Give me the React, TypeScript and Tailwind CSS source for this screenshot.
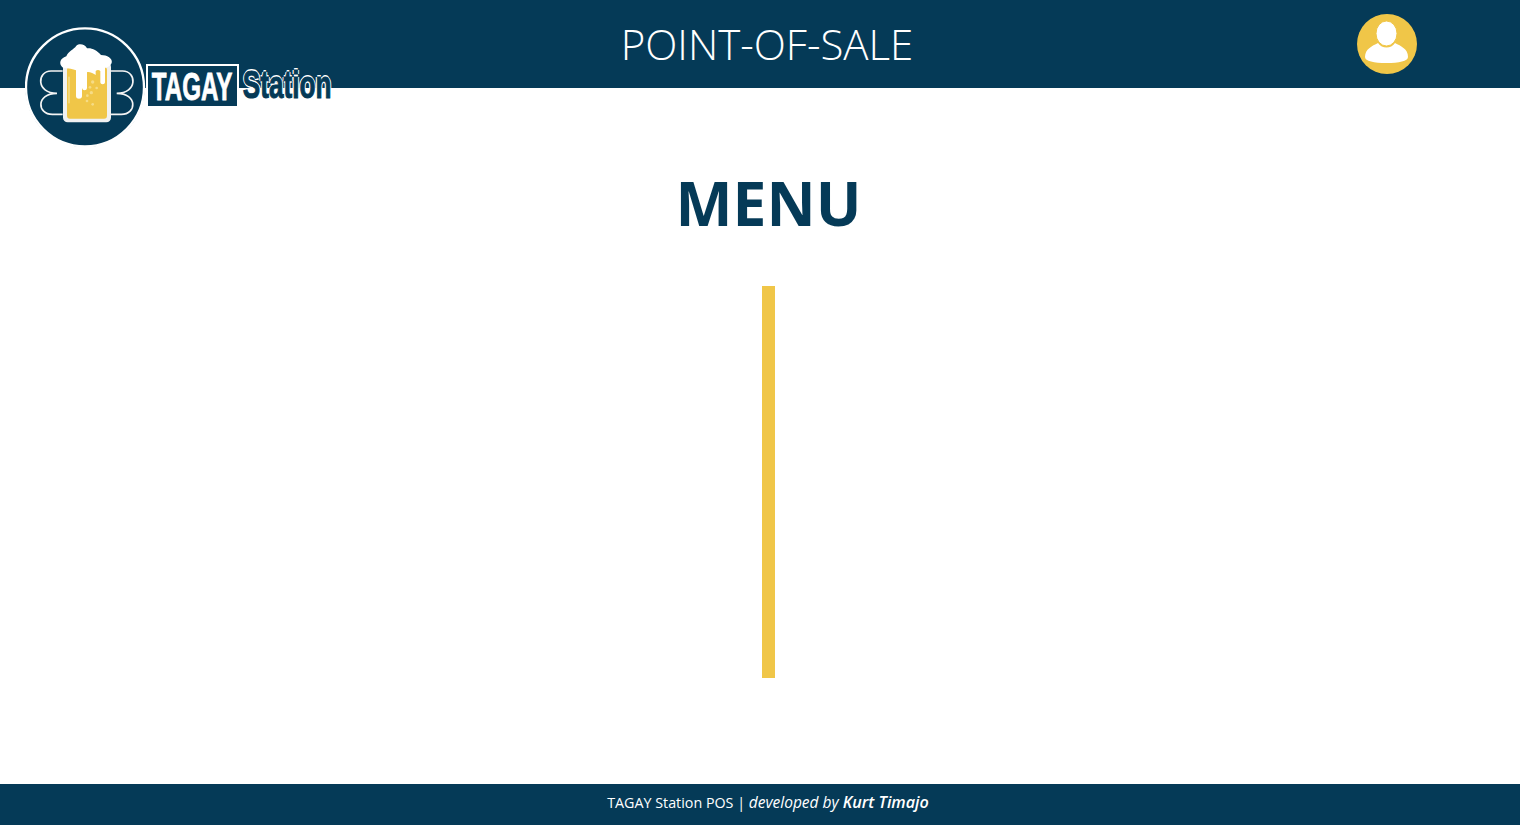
const FONT = "font-['Open_Sans','Noto_Sans',sans-serif]"

function Logo() {
  return (
    <div className="absolute left-[25px] top-[25px] flex items-start">
      <svg width="125" height="125" viewBox="0 0 375 375" className="shrink-0">
        <circle cx="180" cy="187" r="179" fill="#053a57" />
        <circle cx="180" cy="187" r="177" fill="none" stroke="#fff" strokeWidth="7" />
        <g fill="none" stroke="#f4f4f4" strokeWidth="5">
          <path d="M113 138H78C36 138 32 205 96 205C32 205 36 268 82 268H113" />
          <path d="M258 138H293C335 138 339 205 275 205C339 205 335 268 289 268H258" />
        </g>
        <rect x="114" y="112" width="144" height="180" rx="14" fill="#f1f1f1" />
        <rect x="126" y="126" width="120" height="155" rx="9" fill="#f0c648" />
        <path d="M132 155V235" stroke="#f8e7a8" strokeWidth="3" />
        <g fill="#f6dc86">
          <circle cx="203" cy="171" r="5" />
          <circle cx="195" cy="187" r="4" />
          <circle cx="215" cy="189" r="4" />
          <circle cx="199" cy="203" r="5" />
          <circle cx="187" cy="212" r="4" />
          <circle cx="186" cy="228" r="4" />
          <circle cx="203" cy="238" r="4" />
        </g>
        <path
          d="M114 128C100 118 104 100 124 94C130 78 146 74 154 62C164 54 180 58 186 70C200 68 216 76 228 90C246 90 264 100 260 114C256 124 246 128 240 128V172C240 180 226 180 226 172V138C222 134 216 134 212 138V150C206 146 190 138 186 142V188C186 198 172 198 171 188V160V214C171 224 153 224 153 214V136C144 132 132 130 114 128Z"
          fill="#fff"
        />
      </svg>
      <div className="flex items-start -ml-[3px] mt-[39px]">
        <div className="-ml-px h-[42px] w-[93px] bg-[#053a57] border-l-2 border-t-2 border-r-2 border-white flex items-center justify-center overflow-hidden">
          <span className="font-['Liberation_Sans',sans-serif] font-bold text-[39px] leading-none text-white [-webkit-text-stroke:0.8px_#fff] scale-x-[0.62] whitespace-nowrap">
            TAGAY
          </span>
        </div>
        <div className="w-[96px] h-[40px] flex items-center justify-center">
          <span className="font-['Liberation_Sans',sans-serif] font-bold text-[39px] leading-none text-[#053a57] [-webkit-text-stroke:1px_#053a57] [text-shadow:-2px_0_0_#fff,2px_0_0_#fff,0_-2px_0_#fff,0_2px_0_#fff] scale-x-[0.67] whitespace-nowrap">
            Station
          </span>
        </div>
      </div>
    </div>
  )
}

function UserIcon() {
  return (
    <svg width="60" height="60" viewBox="0 0 60 60">
      <circle cx="30" cy="30" r="30" fill="#f0c648" />
      <path
        d="M21 29C25 35 34 35 38 29C44 32 51 35 51 43C51 47 42 49 29.5 49C17 49 8 47 8 43C8 35 15 32 21 29Z"
        fill="#fff"
      />
      <ellipse cx="29.5" cy="19.5" rx="10.5" ry="12.5" fill="#fff" stroke="#f0c648" strokeWidth="1" />
    </svg>
  )
}

export default function App() {
  return (
    <div className={`relative h-[825px] w-full flex flex-col bg-white overflow-hidden ${FONT}`}>
      <header className="h-[88px] shrink-0 bg-[#053a57] flex items-center pl-[14px]">
        <div className="flex-1 text-center font-light text-[42px] leading-none text-white">POINT-OF-SALE</div>
        <div className="absolute right-[103px] top-[14px]">
          <UserIcon />
        </div>
      </header>
      <Logo />
      <main className="flex-1 flex flex-col items-center pl-[17px] pt-[77px]">
        <h1 className="font-bold text-[60.5px] leading-[76px] text-[#053a57]">MENU</h1>
        <div className="mt-[45px] w-[13px] h-[392px] bg-[#f0c648]" />
      </main>
      <footer className="h-[41px] shrink-0 bg-[#053a57] flex justify-center items-baseline pl-[16px] pt-[6px] text-white">
        <span className="text-[14.3px]">TAGAY Station POS |&nbsp;</span>
        <span className="italic text-[15.5px]">developed by&nbsp;</span>
        <span className="italic font-semibold text-[16.2px]">Kurt Timajo</span>
      </footer>
    </div>
  )
}
